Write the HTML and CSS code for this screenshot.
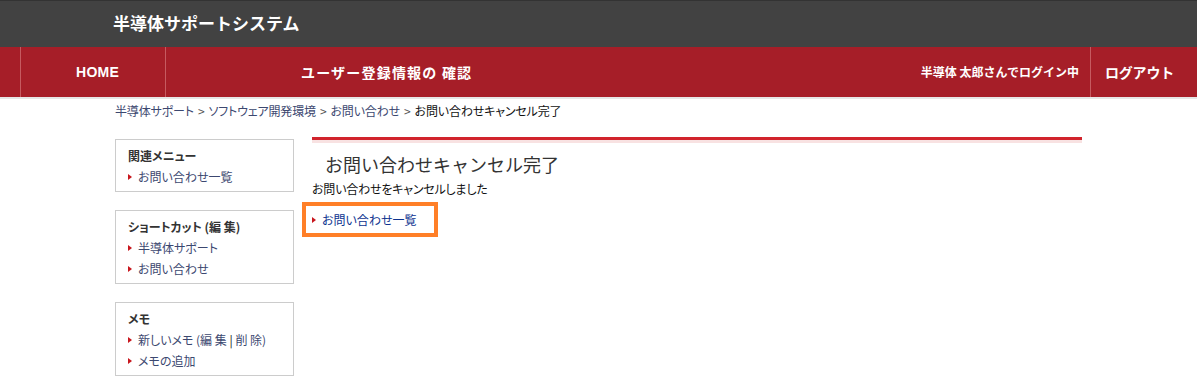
FILE: index.html
```html
<!DOCTYPE html>
<html lang="ja">
<head>
<meta charset="utf-8">
<title>お問い合わせキャンセル完了</title>
<link rel="stylesheet" href="styles.css">
</head>
<body>
<header class="topbar">
  <div class="site-title">半導体サポートシステム</div>
</header>
<nav class="navbar">
  <div class="nav-spacer"></div>
  <div class="nav-home">HOME</div>
  <div class="nav-title">ユーザー登録情報の 確認</div>
  <div class="nav-user">半導体 太郎さんでログイン中</div>
  <div class="nav-logout">ログアウト</div>
</nav>
<div class="page">
  <div class="breadcrumb">
    <a class="crumb">半導体サポート</a><span class="sep">&gt;</span><a class="crumb">ソフトウェア開発環境</a><span class="sep">&gt;</span><a class="crumb">お問い合わせ</a><span class="sep">&gt;</span><span class="current">お問い合わせキャンセル完了</span>
  </div>
  <div class="columns">
    <aside class="sidebar">
      <div class="side-box">
        <div class="side-title">関連メニュー</div>
        <div class="side-item"><span class="tri"></span><a>お問い合わせ一覧</a></div>
      </div>
      <div class="side-box">
        <div class="side-title">ショートカット (編 集)</div>
        <div class="side-item"><span class="tri"></span><a>半導体サポート</a></div>
        <div class="side-item"><span class="tri"></span><a>お問い合わせ</a></div>
      </div>
      <div class="side-box">
        <div class="side-title">メモ</div>
        <div class="side-item"><span class="tri"></span><a>新しいメモ (編 集 <span class="bar">|</span> 削 除)</a></div>
        <div class="side-item"><span class="tri"></span><a>メモの追加</a></div>
      </div>
    </aside>
    <main class="main">
      <h1 class="main-title">お問い合わせキャンセル完了</h1>
      <p class="message">お問い合わせをキャンセルしました</p>
      <div class="link-box"><span class="tri"></span><a class="main-link">お問い合わせ一覧</a></div>
    </main>
  </div>
</div>
</body>
</html>
```

FILE: styles.css
```css
* { box-sizing: border-box; }
html, body { margin: 0; padding: 0; background: #ffffff; }
body {
  font-family: "Noto Sans CJK JP", "Liberation Sans", sans-serif;
  font-size: 12px;
  color: #222;
}
a { text-decoration: none; }

.topbar {
  height: 47px;
  background: #424242;
  border-top: 1px solid #333333;
  padding-left: 113px;
}
.site-title {
  color: #ffffff;
  font-weight: bold;
  font-size: 17px;
  line-height: 44px;
  letter-spacing: 0;
}

.navbar {
  display: flex;
  height: 52px;
  background: #a61e28;
  border-bottom: 2px solid #e6e6e6;
  color: #ffffff;
  font-weight: bold;
  align-items: stretch;
}
.nav-spacer { width: 21px; border-right: 1px solid #c65a60; }
.nav-home {
  width: 145px;
  border-right: 1px solid #c65a60;
  padding-left: 55px;
  font-family: "Liberation Sans", Arial, sans-serif;
  font-size: 14px;
  line-height: 50px;
  letter-spacing: 0.3px;
}
.nav-title {
  flex: 1;
  padding-left: 135px;
  font-size: 14px;
  line-height: 50px;
  letter-spacing: 1.2px;
}
.nav-user {
  padding-right: 11px;
  font-size: 12px;
  line-height: 50px;
  letter-spacing: 0;
}
.nav-logout {
  width: 107px;
  border-left: 1px solid #c65a60;
  padding-left: 14px;
  font-size: 14px;
  line-height: 50px;
  letter-spacing: -0.2px;
}

.page { padding-left: 115px; }
.breadcrumb {
  line-height: 22px;
  padding-top: 1px;
  font-feature-settings: "palt";
  letter-spacing: -0.15px;
}
.crumb { color: #3c4870; }
.current { color: #111; }
.sep { color: #555; margin: 0 4px; }

.columns {
  display: flex;
  align-items: flex-start;
  gap: 18px;
  margin-top: 15px;
}
.sidebar { width: 179px; margin-top: 2px; }
.side-box {
  border: 1px solid #cccccc;
  padding: 6px 12px 4px;
  margin-bottom: 18px;
}
.side-title {
  font-weight: bold;
  color: #333;
  line-height: 19px;
  margin-bottom: 1px;
  font-feature-settings: "palt";
}
.side-item {
  display: flex;
  align-items: center;
  line-height: 21px;
  color: #3c4870;
  font-feature-settings: "palt";
}
.side-item a { color: #3c4870; }
.side-item .bar { color: #111; }
.tri {
  display: inline-block;
  width: 0;
  height: 0;
  border-left: 4px solid #c8161d;
  border-top: 3.5px solid transparent;
  border-bottom: 3.5px solid transparent;
  margin-right: 6px;
  flex: none;
}

.main { width: 770px; }
.main-title {
  margin: 0;
  border-top: 3px solid #d1232c;
  background: linear-gradient(#f8e2e2 0, #f8e2e2 3px, transparent 3px);
  padding: 11px 0 0 13px;
  font-size: 18px;
  font-weight: normal;
  color: #333;
  line-height: 26px;
  letter-spacing: 0;
}
.message {
  margin: 4px 0 0;
  line-height: 16px;
  color: #111;
  font-feature-settings: "palt";
  letter-spacing: -0.2px;
}
.link-box {
  display: inline-flex;
  align-items: center;
  margin: 5px 0 0 -10px;
  width: 136px;
  height: 35px;
  border: 4px solid #ff7f27;
  padding-left: 6px;
  font-feature-settings: "palt";
}
.main-link { color: #0d338f; }
```
